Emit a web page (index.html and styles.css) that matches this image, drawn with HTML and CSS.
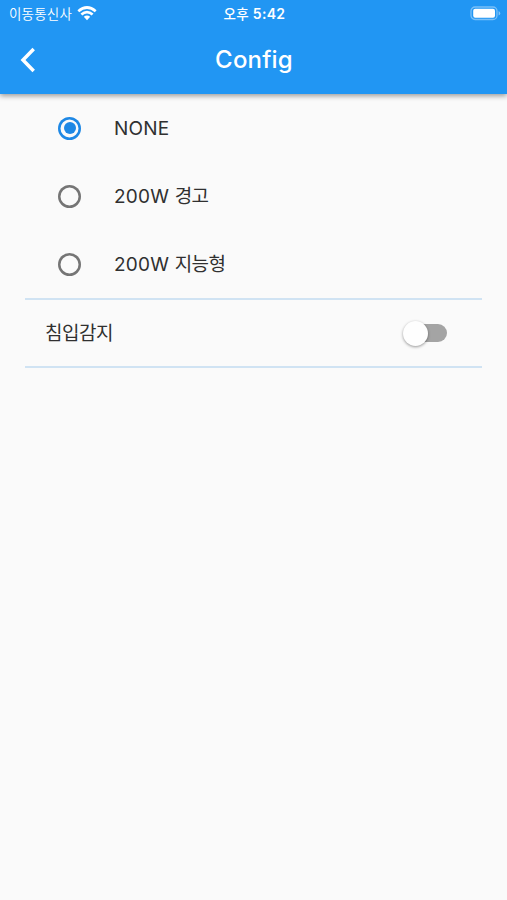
FILE: index.html
```html
<!DOCTYPE html>
<html lang="ko">
<head>
<meta charset="utf-8">
<title>Config</title>
<link rel="stylesheet" href="styles.css">
</head>
<body>
<header class="app-header">
  <div class="status-bar">
    <div class="carrier">
      <span class="carrier-name">이동통신사</span>
      <svg class="wifi" width="20" height="15" viewBox="0 0 20 15">
        <g fill="none" stroke="#fff" stroke-width="2.7">
          <path d="M1.3 5.2Q10-2.200 18.700 5.200"/>
          <path d="M4.400 8.500Q10 3.600 15.600 8.500"/>
        </g>
        <path d="M6.800 10.800Q10 8 13.200 10.800L10 14.200Z" fill="#fff"/>
      </svg>
    </div>
    <div class="clock"><span class="period">오후</span> 5:42</div>
    <div class="battery-wrap">
      <svg width="31" height="15" viewBox="0 0 31 15">
        <rect x="1" y="1" width="26" height="12.5" rx="4" fill="none" stroke="#fff" stroke-opacity=".4" stroke-width="1.3"/>
        <rect x="3.200" y="2.800" width="21.800" height="9" rx="2" fill="#fff"/>
        <path d="M28.600 5v4.600q1.600-.7 1.600-2.300t-1.600-2.300z" fill="#fff" fill-opacity=".45"/>
      </svg>
    </div>
  </div>
  <div class="nav-bar">
    <svg class="back" width="16" height="26" viewBox="0 0 16 26"><path d="M13.700 2L3 13l10.700 11" fill="none" stroke="#fff" stroke-width="3.500"/></svg>
    <h1 class="title">Config</h1>
  </div>
</header>
<main class="settings">
  <div class="option"><span class="radio radio-on"></span><span class="label label-latin">NONE</span></div>
  <div class="option"><span class="radio"></span><span class="label">200W <span class="ko">경고</span></span></div>
  <div class="option"><span class="radio"></span><span class="label">200W <span class="ko">지능형</span></span></div>
  <div class="switch-row">
    <span class="ko switch-label">침입감지</span>
    <span class="switch"><span class="thumb"></span></span>
  </div>
</main>
</body>
</html>
```
FILE: styles.css
```css
* { box-sizing: border-box; }
body {
  margin: 0;
  min-height: 900px;
  background: #fafafa;
  color: #303030;
  font-family: Inter, "Noto Sans CJK KR", sans-serif;
}
.app-header {
  height: 94px;
  background: #2196f3;
  color: #fff;
  box-shadow: 0 2px 5px rgba(0, 0, 0, .38);
}
.status-bar {
  height: 27px;
  display: grid;
  grid-template-columns: 1fr auto 1fr;
  align-items: center;
  padding: 0 7px 0 9px;
}
.carrier { display: flex; align-items: center; gap: 5px; }
.carrier-name {
  font: 350 13.5px/20px "Noto Sans CJK KR", sans-serif;
  letter-spacing: 0.2px;
  margin-top: -2px;
}
.wifi { margin-top: -1px; }
.clock { font-size: 14px; line-height: 20px; font-weight: 600; letter-spacing: .3px; white-space: nowrap; }
.period { font-size: 13.5px; font-weight: 500; }
.battery-wrap { display: flex; justify-content: flex-end; margin-right: -1px; }
.nav-bar {
  height: 66px;
  display: grid;
  grid-template-columns: 1fr auto 1fr;
  align-items: center;
  padding: 0 19px 0 20px;
}
.title { margin: 0; font-size: 24px; line-height: 30px; font-weight: 500; letter-spacing: .2px; }
.settings { padding: 0 25px; }
.option {
  height: 68px;
  display: flex;
  align-items: center;
  padding-left: 33px;
  font-size: 19px;
  letter-spacing: .2px;
}
.label { margin-left: 33px; line-height: 26px; }
.label-latin { padding-top: 1px; }
.ko { font-family: "Noto Sans CJK KR", sans-serif; font-size: 19px; letter-spacing: -.5px; }
.radio {
  width: 23px;
  height: 23px;
  box-shadow: inset 0 0 0 2.5px #757575;
  border-radius: 50%;
  display: grid;
  place-items: center;
}
.radio-on { box-shadow: inset 0 0 0 2.5px #1e88e5; }
.radio-on::after {
  content: "";
  width: 12px;
  height: 12px;
  border-radius: 50%;
  background: #1e88e5;
}
.switch-row {
  height: 70px;
  display: flex;
  align-items: center;
  justify-content: space-between;
  padding: 0 35px 0 20px;
  border-top: 2px solid #d0e3f3;
  border-bottom: 2px solid #d0e3f3;
}
.switch-label { padding-bottom: 3px; }
.switch {
  width: 40px;
  height: 18px;
  border-radius: 9px;
  background: #a4a4a4;
  display: flex;
  align-items: center;
}
.thumb {
  flex: none;
  width: 25px;
  height: 25px;
  margin-left: -4px;
  border-radius: 50%;
  background: #fefefe;
  box-shadow: 0 1px 3px rgba(0, 0, 0, .4);
}
```
